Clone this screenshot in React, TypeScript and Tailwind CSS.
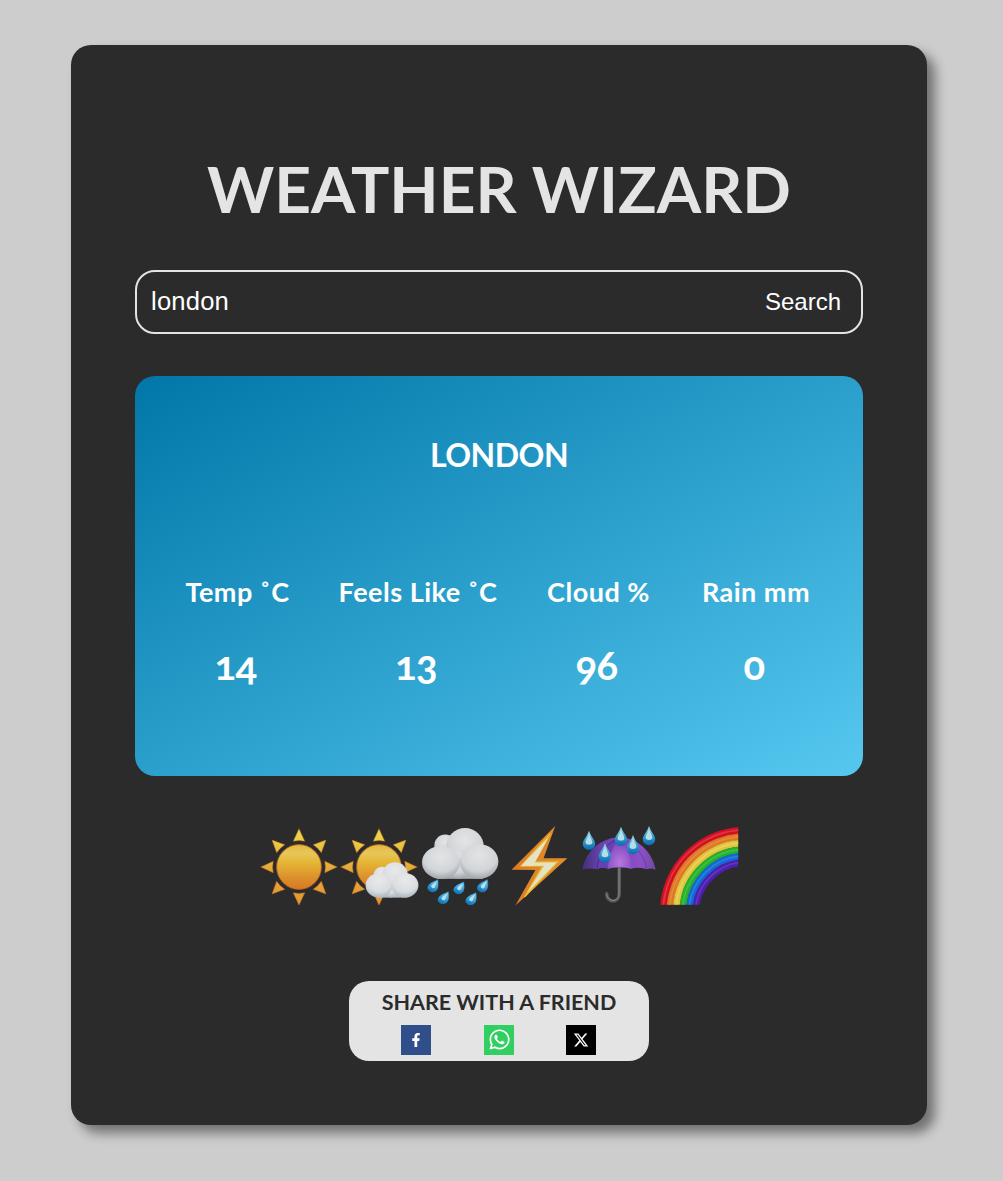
import React, { useState } from "react";
import { FaFacebookF } from "react-icons/fa";
import { FaWhatsapp, FaXTwitter } from "react-icons/fa6";

const RAYS = [0, 45, 90, 135, 180, 225, 270, 315];

function SunShape({ id }: { id: string }) {
  return (
    <>
      <defs>
        <linearGradient id={`${id}-disc`} x1="0" y1="0" x2="0" y2="1">
          <stop offset="0" stopColor="#e6b83c" />
          <stop offset="0.2" stopColor="#e6c658" />
          <stop offset="0.4" stopColor="#e5b635" />
          <stop offset="0.75" stopColor="#dc8e2c" />
          <stop offset="1" stopColor="#d57924" />
        </linearGradient>
        <linearGradient id={`${id}-ray`} gradientUnits="userSpaceOnUse" x1="0" y1="4" x2="0" y2="80">
          <stop offset="0" stopColor="#ecd94c" />
          <stop offset="0.5" stopColor="#e5ab3a" />
          <stop offset="1" stopColor="#e49532" />
        </linearGradient>
      </defs>
      {RAYS.map((a) => {
        const t = (a * Math.PI) / 180;
        const p = (r: number, s: number) =>
          `${40 + r * Math.sin(t) + s * Math.cos(t)},${42 - r * Math.cos(t) + s * Math.sin(t)}`;
        return (
          <polygon
            key={a}
            points={`${p(38.2, 0)} ${p(25.8, 5.8)} ${p(26.4, 0)} ${p(25.8, -5.8)}`}
            fill={`url(#${id}-ray)`}
            stroke="#b8691f"
            strokeWidth="0.5"
          />
        );
      })}
      <circle cx="40" cy="42" r="22.4" fill={`url(#${id}-disc)`} stroke="#b85f1c" strokeWidth="0.8" />
    </>
  );
}

function Sun() {
  return (
    <svg viewBox="0 0 80 80" className="size-20">
      <SunShape id="sun" />
    </svg>
  );
}

function SunCloud() {
  return (
    <svg viewBox="0 0 80 80" className="size-20">
      <defs>
        <radialGradient id="sc-puff" cx="0.5" cy="0.3" r="0.72">
          <stop offset="0" stopColor="#e8e9ea" />
          <stop offset="0.65" stopColor="#dadde0" />
          <stop offset="1" stopColor="#a9b3bd" />
        </radialGradient>
      </defs>
      <SunShape id="sunc" />
      <circle cx="43" cy="50.3" r="8.5" fill="url(#sc-puff)" />
      <circle cx="56" cy="50" r="12.8" fill="url(#sc-puff)" />
      <rect x="38" y="58" width="30" height="14.6" fill="#b6bec6" />
      <circle cx="52" cy="62" r="10.4" fill="url(#sc-puff)" />
      <ellipse cx="40" cy="60.4" rx="13.4" ry="12.2" fill="url(#sc-puff)" />
      <ellipse cx="66" cy="60.3" rx="13.4" ry="12.3" fill="url(#sc-puff)" />
    </svg>
  );
}

const RAIN = [
  [18.7, 54.7, 13.9, 62.1],
  [44.7, 57, 39.9, 64.1],
  [68.4, 54.7, 63.5, 62.3],
  [29.3, 66.8, 24.2, 74],
  [56.9, 67.7, 51.9, 75.1],
];

function RainCloud() {
  return (
    <svg viewBox="0 0 80 80" className="size-20 overflow-visible">
      <defs>
        <radialGradient id="rc-puff" cx="0.5" cy="0.32" r="0.7">
          <stop offset="0" stopColor="#e3e4e6" />
          <stop offset="0.65" stopColor="#d2d5d8" />
          <stop offset="1" stopColor="#9da1a9" />
        </radialGradient>
        <linearGradient id="rc-drop" x1="0.8" y1="0" x2="0.4" y2="1">
          <stop offset="0" stopColor="#8ccfe6" />
          <stop offset="0.5" stopColor="#45a8dc" />
          <stop offset="1" stopColor="#0874be" />
        </linearGradient>
      </defs>
      <circle cx="26.3" cy="20.5" r="11" fill="url(#rc-puff)" />
      <circle cx="46" cy="21.8" r="18.8" fill="url(#rc-puff)" />
      <rect x="18" y="34" width="46" height="19.8" fill="#abafb6" />
      <circle cx="39" cy="39.3" r="14.5" fill="url(#rc-puff)" />
      <ellipse cx="22" cy="37.4" rx="19" ry="16.5" fill="url(#rc-puff)" />
      <ellipse cx="60" cy="36.5" rx="19.4" ry="17.3" fill="url(#rc-puff)" />
      {RAIN.map(([tx, ty, cx, cy]) => (
        <g key={tx}>
          <path
            d={`M${tx} ${ty} C${tx + 0.6} ${ty + 4} ${cx + 5.6} ${cy + 1.2} ${cx + 3.6} ${cy + 3} C${cx + 0.6} ${cy + 6} ${cx - 5.6} ${cy + 4.4} ${cx - 5} ${cy} C${cx - 4.2} ${cy - 4.4} ${tx - 2} ${ty + 1.5} ${tx} ${ty}Z`}
            fill="url(#rc-drop)"
            stroke="#2a93cf"
            strokeWidth="0.6"
          />
          <path
            d={`M${tx - 1} ${ty + 1.6} C${tx - 2.5} ${ty + 3} ${cx - 2.6} ${cy - 2} ${cx - 1.6} ${cy} C${cx - 0.6} ${cy + 1.6} ${cx + 1.4} ${cy + 1.6} ${cx + 2.2} ${cy}Z`}
            fill="#b5e2ee"
          />
        </g>
      ))}
    </svg>
  );
}

function Bolt() {
  return (
    <svg viewBox="0 0 80 80" className="size-20 overflow-visible">
      <defs>
        <linearGradient id="bolt-edge" x1="0" y1="0" x2="1" y2="0.3">
          <stop offset="0" stopColor="#dd7426" />
          <stop offset="1" stopColor="#e0902c" />
        </linearGradient>
      </defs>
      <polygon points="56.2,1 12.5,44.7 36.4,45 16.4,80.5 68.3,33.2 44.6,33.2" fill="url(#bolt-edge)" />
      <polygon
        points="51.5,8.5 22,41 43.5,41 25.5,72 58.5,37 35.5,37"
        fill="#e5ba2e"
        stroke="#e5ba2e"
        strokeWidth="1.4"
      />
      <polygon points="49,13 22.5,40.7 34,40.7" fill="#e5e3c5" />
      <polygon points="49,13 22.5,40.7 45,40.7 28,68 57.5,37.4 35.5,37.4" fill="#e5e3c5" />
    </svg>
  );
}

const DROPS = [
  [10, 5.7],
  [42, 1.7],
  [70, 1],
  [54, 10],
  [26, 18.3],
];

function Umbrella() {
  return (
    <svg viewBox="0 0 80 80" className="size-20 overflow-visible">
      <defs>
        <radialGradient id="um-mid" cx="0.5" cy="0.8" r="0.7">
          <stop offset="0" stopColor="#b877dc" />
          <stop offset="1" stopColor="#7d45bd" />
        </radialGradient>
        <linearGradient id="um-all" x1="0" y1="0" x2="1" y2="0">
          <stop offset="0" stopColor="#40307e" />
          <stop offset="0.25" stopColor="#6a42ad" />
          <stop offset="0.8" stopColor="#8d50c8" />
          <stop offset="1" stopColor="#70489f" />
        </linearGradient>
        <linearGradient id="um-drop" x1="0" y1="0" x2="0" y2="1">
          <stop offset="0" stopColor="#a5dbe8" />
          <stop offset="0.5" stopColor="#3b9ed3" />
          <stop offset="1" stopColor="#0868af" />
        </linearGradient>
      </defs>
      <path d="M40.3 43 V68.5 C40.3 78.5 28 78.5 27.7 68.6" fill="none" stroke="#55585b" strokeWidth="3.5" strokeLinecap="round" />
      <path d="M40 43 V68.5 C40 77.7 29 77.7 27.7 69" fill="none" stroke="#909295" strokeWidth="0.9" />
      <path d="M3.3 44.7 C7 26 22 12.6 40.3 12.6 C58 12.6 73 26 76.7 44.7 Q72 42.4 67.5 44.2 Q59 41.8 52.5 43.7 Q40 41 29 43.7 Q23 41.8 18 44.2 Q10 42.4 3.3 44.7Z" fill="url(#um-all)" />
      <path d="M18 44.2 C19 30 27 18 40 13 C33 23 29.5 32 29 43.7 Q23 41.8 18 44.2Z" fill="#6741b3" />
      <path d="M29 43.7 C29.5 32 33 23 40.3 13 C48 23 52 32 52.5 43.7 Q40 41 29 43.7Z" fill="url(#um-mid)" />
      <path d="M67.5 44.2 C66 31 56 18 40.3 13" fill="none" stroke="#6435a3" strokeWidth="0.8" />
      <path d="M18 44.2 C19 30 27 18 40 13" fill="none" stroke="#3d2b7c" strokeWidth="0.8" />
      {DROPS.map(([x, y]) => (
        <g key={x}>
          <path
            d={`M${x} ${y} C${x + 1.8} ${y + 6} ${x + 6.2} ${y + 9} ${x + 6.2} ${y + 13.2} A6.2 6.2 0 0 1 ${x - 6.2} ${y + 13.2} C${x - 6.2} ${y + 9} ${x - 1.8} ${y + 6} ${x} ${y}Z`}
            fill="url(#um-drop)"
          />
          <path
            d={`M${x} ${y + 2.5} C${x + 1} ${y + 7} ${x + 3.4} ${y + 9} ${x + 3.4} ${y + 12} C${x + 3} ${y + 14.5} ${x - 3} ${y + 14.5} ${x - 3.4} ${y + 12} C${x - 3.4} ${y + 9} ${x - 1} ${y + 7} ${x} ${y + 2.5}Z`}
            fill="#b5dfe8"
          />
        </g>
      ))}
    </svg>
  );
}

const BANDS = [
  { r: 82.2, c: "#d30f22", h: "#dd3543" },
  { r: 75.7, c: "#df7826", h: "#e58b3c" },
  { r: 69.2, c: "#e3c43f", h: "#e8d25a" },
  { r: 62.7, c: "#27b02c", h: "#3fbe3f" },
  { r: 56.2, c: "#1169d4", h: "#2a7edc" },
  { r: 49.7, c: "#4c1fb1", h: "#6235bd" },
];

function Rainbow() {
  return (
    <svg viewBox="0 0 80 80" className="size-20">
      <defs>
        <clipPath id="rb-clip">
          <rect x="0" y="0" width="79.2" height="79.8" />
        </clipPath>
      </defs>
      <g clipPath="url(#rb-clip)" fill="none">
        {BANDS.map((b) => (
          <g key={b.r}>
            <circle cx="86.5" cy="87.3" r={b.r} stroke={b.c} strokeWidth="6.8" />
            <circle cx="86.5" cy="87.3" r={b.r + 0.3} stroke={b.h} strokeWidth="1.8" />
          </g>
        ))}
      </g>
    </svg>
  );
}

const READINGS = [
  { label: "Temp ˚C", value: "14", labelClass: "w-[103px]" },
  { label: "Feels Like ˚C", value: "13", labelClass: "w-[158px]" },
  { label: "Cloud %", value: "96", labelClass: "w-[103px]" },
  { label: "Rain mm", value: "0", labelClass: "w-[112px]" },
];

export default function App() {
  const [city, setCity] = useState("london");
  return (
    <div className="flex h-[1181px] w-full justify-center bg-[#cdcdcd] pt-[45px] pr-[5px] font-['Lato',sans-serif]">
      <main className="flex h-[1080px] w-[856px] flex-col items-center rounded-[20px] bg-[#2b2b2b] px-16 shadow-[8px_8px_12px_rgba(0,0,0,0.45)]">
        <h1 className="mt-[106px] text-[64px] leading-[76px] font-bold whitespace-nowrap text-[#e4e4e4]">
          WEATHER WIZARD
        </h1>
        <form
          onSubmit={(e) => e.preventDefault()}
          className="mt-[43px] flex h-16 w-full shrink-0 items-center justify-between rounded-[20px] border-2 border-[#e4e4e4] pr-5 pl-3.5 font-['Liberation_Sans',sans-serif] text-white"
        >
          <input
            value={city}
            onChange={(e) => setCity(e.target.value)}
            className="min-w-0 flex-1 bg-transparent pb-0.5 text-[25.6px] tracking-[0.2px] outline-none"
          />
          <button className="text-2xl">Search</button>
        </form>
        <section className="mt-[42px] flex h-[400px] w-full shrink-0 flex-col items-center rounded-[20px] bg-[linear-gradient(to_bottom_right,#0077a8,#56c8f0)] text-white">
          <h2 className="mt-[60px] text-[32px] leading-[38px] font-bold tracking-[-0.5px]">LONDON</h2>
          <div className="mt-[103px] flex gap-[50px]">
            {READINGS.map((r) => (
              <div key={r.label} className="flex flex-col items-center">
                <div
                  className={`${r.labelClass} flex justify-center text-[27px] leading-[30px] font-bold tracking-[0.5px] whitespace-nowrap`}
                >
                  {r.label}
                </div>
                <div className="mt-[36px] pr-1 text-[40px] leading-[44px] font-bold tracking-[-0.5px] oldstyle-nums">
                  {r.value}
                </div>
              </div>
            ))}
          </div>
        </section>
        <div className="mt-[49px] flex">
          <Sun />
          <SunCloud />
          <RainCloud />
          <Bolt />
          <Umbrella />
          <Rainbow />
        </div>
        <footer className="mt-[76px] flex h-20 w-[300px] flex-col items-center rounded-[20px] bg-[#e4e4e4] text-[#2b2b2b]">
          <p className="mt-2 text-[21.5px] leading-[26px] font-bold whitespace-nowrap">SHARE WITH A FRIEND</p>
          <div className="mt-2.5 flex gap-[52.5px] pr-[1px] text-white">
            <a className="flex size-[30px] items-center justify-center bg-[#304f8a]">
              <FaFacebookF size={14} />
            </a>
            <a className="flex size-[30px] items-center justify-center bg-[#2fcf62] pb-0.5 pl-px">
              <FaWhatsapp size={23} />
            </a>
            <a className="flex size-[30px] items-center justify-center bg-black">
              <FaXTwitter size={16} />
            </a>
          </div>
        </footer>
      </main>
    </div>
  );
}
